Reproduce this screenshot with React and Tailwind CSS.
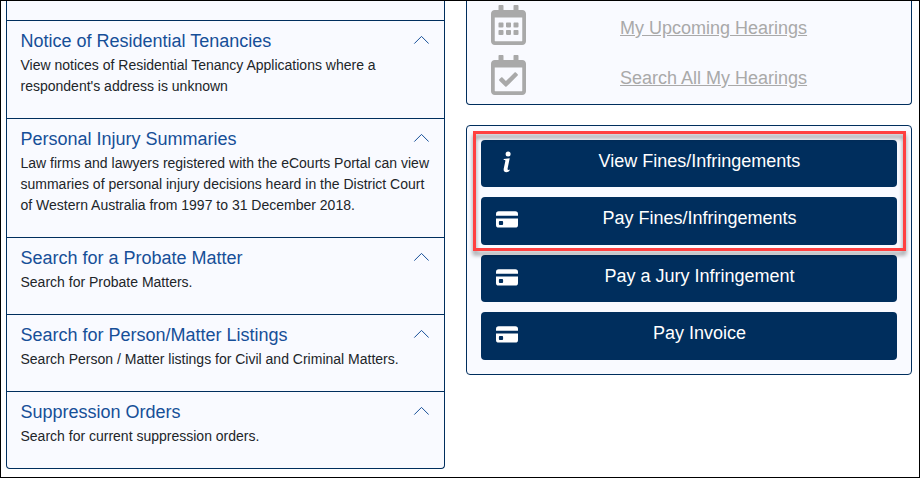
import { FaRegCalendarAlt, FaRegCalendarCheck } from "react-icons/fa";

const notices = [
  {
    title: "Notice of Residential Tenancies",
    lines: ["View notices of Residential Tenancy Applications where a", "respondent's address is unknown"],
  },
  {
    title: "Personal Injury Summaries",
    lines: [
      "Law firms and lawyers registered with the eCourts Portal can view",
      "summaries of personal injury decisions heard in the District Court",
      "of Western Australia from 1997 to 31 December 2018.",
    ],
  },
  { title: "Search for a Probate Matter", lines: ["Search for Probate Matters."] },
  { title: "Search for Person/Matter Listings", lines: ["Search Person / Matter listings for Civil and Criminal Matters."] },
  { title: "Suppression Orders", lines: ["Search for current suppression orders."] },
];

const hearings = [
  { label: "My Upcoming Hearings", Icon: FaRegCalendarAlt },
  { label: "Search All My Hearings", Icon: FaRegCalendarCheck },
];

function ChevronUp() {
  return (
    <svg viewBox="0 0 16 9" className="mb-[3px] h-[9px] w-4 shrink-0" fill="none" stroke="#164f98" strokeWidth="1">
      <path d="M1.3 8.6 8.5 1.4l7.2 7.2" />
    </svg>
  );
}

function InfoIcon() {
  return (
    <svg viewBox="0 0 22 22" className="h-[22px] w-[22px]" fill="currentColor">
      <circle cx="12.1" cy="2.9" r="2.5" />
      <path d="M13.7 7.2 11.6 17.6c-.2 1 .1 1.4.8 1.4.5 0 1-.2 1.4-.5l-.3 1.3c-.6.8-1.8 1.4-3.1 1.4-2.1 0-3.1-1.3-2.7-3.4l1.6-7.6c.1-.7 0-1-.7-1.1l-1-.2.2-.9z" />
    </svg>
  );
}

function CardIcon() {
  return (
    <svg viewBox="0 0 22 17" className="h-[17px] w-[22px]" fill="currentColor">
      <path d="M0 4.7V2.9A2.7 2.7 0 0 1 2.7.2h16.6A2.7 2.7 0 0 1 22 2.9v1.8z" />
      <path fillRule="evenodd" d="M0 7.4v6.5a2.7 2.7 0 0 0 2.7 2.7h16.6a2.7 2.7 0 0 0 2.7-2.7V7.4zM3.8 10h2.4a.9.9 0 0 1 .9.9v2.1a.9.9 0 0 1-.9.9H3.8a.9.9 0 0 1-.9-.9v-2.1a.9.9 0 0 1 .9-.9z" />
    </svg>
  );
}

const actions = [
  { label: "View Fines/Infringements", Icon: InfoIcon },
  { label: "Pay Fines/Infringements", Icon: CardIcon },
  { label: "Pay a Jury Infringement", Icon: CardIcon },
  { label: "Pay Invoice", Icon: CardIcon },
];

function NoticeItem({ title, lines }) {
  return (
    <section className="border-t border-[#002e5d] pt-2 pr-[15px] pb-[21px] pl-[13.5px]">
      <div className="mb-[1.5px] flex h-6 items-center justify-between">
        <h2 className="text-[18px] leading-6 whitespace-nowrap text-[#164f98]">{title}</h2>
        <ChevronUp />
      </div>
      <p className="mb-[0.5px] text-[14px] leading-[21px] whitespace-nowrap text-[#212529]">
        {lines.map((line) => (
          <span key={line} className="block">{line}</span>
        ))}
      </p>
    </section>
  );
}

export default function App() {
  return (
    <div className="flex h-[478px] w-[920px] gap-[21px] overflow-hidden border border-black bg-white pl-[5px] font-['Liberation_Sans',Arial,sans-serif]">
      <main className="h-[468px] w-[439px] shrink-0 rounded-b border border-t-0 border-[#002e5d] bg-[#f9faff] pt-[19px]">
        {notices.map((n) => (
          <NoticeItem key={n.title} {...n} />
        ))}
      </main>
      <aside className="flex w-[446px] shrink-0 flex-col gap-5">
        <div className="flex h-[104px] flex-col gap-2.5 rounded-b border border-t-0 border-[#002e5d] bg-[#f9faff] pt-1">
          {hearings.map(({ label, Icon }) => (
            <div key={label} className="flex h-10 items-center pl-6">
              <Icon preserveAspectRatio="none" className="h-10 w-[35px] text-[#a9a9a9]" />
              <a className="ml-[94px] pt-1.5 text-[18px] leading-6 whitespace-nowrap text-[#a9a9a9] underline">{label}</a>
            </div>
          ))}
        </div>
        <div className="relative flex h-[250px] flex-col gap-2.5 rounded border border-[#002e5d] bg-[#f9faff] px-3.5 pt-[13.8px]">
          {actions.map(({ label, Icon }) => (
            <button key={label} className="flex h-[47.5px] shrink-0 items-center rounded bg-[#002e5d] pl-[15px] text-white">
              <span className="flex pb-[3px]">
                <Icon />
              </span>
              <span className="flex-1 pr-4 pb-1.5 text-center text-[18px] leading-6">{label}</span>
            </button>
          ))}
          <div className="pointer-events-none absolute top-[5px] left-[6px] h-[120px] w-[433px] border-3 border-[#ff4040] drop-shadow-[0px_4px_2px_rgba(0,0,0,0.42)]" />
        </div>
      </aside>
    </div>
  );
}
